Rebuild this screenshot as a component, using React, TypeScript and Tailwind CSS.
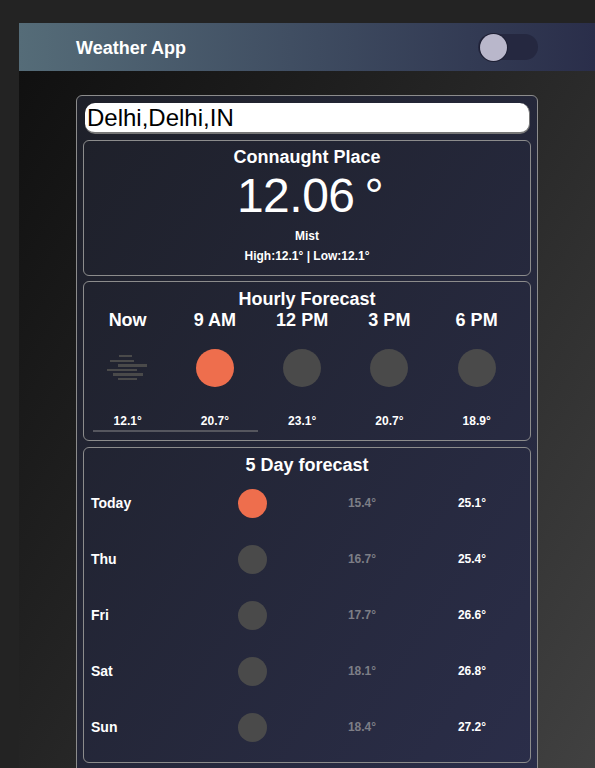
const hourly = [
  { time: "Now", temp: "12.1°", kind: "mist" },
  { time: "9 AM", temp: "20.7°", kind: "sun" },
  { time: "12 PM", temp: "23.1°", kind: "moon" },
  { time: "3 PM", temp: "20.7°", kind: "moon" },
  { time: "6 PM", temp: "18.9°", kind: "moon" },
];

const daily = [
  { day: "Today", low: "15.4°", high: "25.1°", sun: true },
  { day: "Thu", low: "16.7°", high: "25.4°", sun: false },
  { day: "Fri", low: "17.7°", high: "26.6°", sun: false },
  { day: "Sat", low: "18.1°", high: "26.8°", sun: false },
  { day: "Sun", low: "18.4°", high: "27.2°", sun: false },
];

function MistIcon() {
  return (
    <svg width="44" height="30" viewBox="0 0 44 30" className="ml-[3px] text-[#4a4a4a] blur-[0.4px]">
      <g fill="currentColor">
        <rect x="12" y="2" width="13" height="2" />
        <rect x="3" y="7" width="24" height="2" />
        <rect x="11" y="11" width="29" height="3" />
        <rect x="0" y="16" width="30" height="2" />
        <rect x="6" y="20" width="30" height="3" />
        <rect x="11" y="25" width="19" height="2" />
      </g>
    </svg>
  );
}

function Dot({ sun, size }: { sun: boolean; size: string }) {
  return <div className={`${size} rounded-full blur-[0.5px] ${sun ? "bg-[#ee6e4d]" : "bg-[#4a4a4a]"}`} />;
}

export default function App() {
  return (
    <div className="h-[768px] overflow-hidden bg-[#232323] pl-[19px] pt-[23px] font-['Liberation_Sans',Arial,sans-serif] text-white">
      <div className="h-[900px] bg-linear-to-br from-[#0f0f0f] to-[#464646]">
        <header className="flex h-12 items-center justify-between bg-linear-to-r from-[#556c78] to-[#2a2e4a] pl-[57px] pr-[57px]">
          <h1 className="pt-[2px] text-lg font-bold">Weather App</h1>
          <div className="flex h-[26px] w-[60px] items-center rounded-full bg-[#252840] pl-[2px]">
            <div className="size-[27px] rounded-full bg-[#b9b7cb] shadow-[0_0_0_1px_#1d1f33]" />
          </div>
        </header>

        <main className="ml-[57px] mt-6 w-[462px] rounded-md border border-[#8c8c8c] bg-linear-to-br from-[#1e2029] to-[#2b2e4a] px-[6px] pb-8 pt-[7px]">
          <input
            readOnly
            value="Delhi,Delhi,IN"
            className="mx-[2px] block h-[31px] w-[445px] rounded-[10px] border-b-2 border-r border-[#777] bg-white px-[2px] pt-[1px] text-2xl text-black outline-none"
          />

          <section className="mt-[6px] flex h-[136px] flex-col items-center rounded-md border border-[#8c8c8c] pt-[6px]">
            <h2 className="text-lg/5 font-bold">Connaught Place</h2>
            <div className="mt-[5px] pl-[6px] text-5xl/[48px] tracking-[-0.5px] [word-spacing:-3px]">12.06 °</div>
            <p className="mt-[8px] text-xs/4 font-bold">Mist</p>
            <p className="mt-1 text-xs/4 font-bold">High:12.1° | Low:12.1°</p>
          </section>

          <section className="mt-[5px] h-[160px] rounded-md border border-[#8c8c8c] pt-[7px]">
            <h2 className="text-center text-lg/5 font-bold">Hourly Forecast</h2>
            <div className="mt-[1px] grid grid-cols-[repeat(5,87.25px)]">
              {hourly.map((h) => (
                <div key={h.time} className="flex flex-col items-center">
                  <span className="text-lg/5 font-bold">{h.time}</span>
                  <div className="mt-[19px] flex h-[38px] items-center justify-center">
                    {h.kind === "mist" ? (
                      <MistIcon />
                    ) : (
                      <Dot sun={h.kind === "sun"} size="size-[38px]" />
                    )}
                  </div>
                  <span className="mt-[26px] text-xs/4 font-bold">{h.temp}</span>
                </div>
              ))}
            </div>
            <div className="ml-[9px] mt-[1px] h-[2px] w-[165px] bg-[#55565e]" />
          </section>

          <section className="mt-[6px] h-[316px] rounded-md border border-[#8c8c8c] pt-[7px]">
            <h2 className="text-center text-lg/5 font-bold">5 Day forecast</h2>
            <div className="flex flex-col">
              {daily.map((d) => (
                <div
                  key={d.day}
                  className="grid h-14 grid-cols-[106px_110px_110px_110px] items-center pl-[7px] text-sm font-bold"
                >
                  <span className="-mt-[1px]">{d.day}</span>
                  <div className="flex justify-center">
                    <Dot sun={d.sun} size="size-[29px]" />
                  </div>
                  <span className="text-center text-xs text-[#7d7e86]">{d.low}</span>
                  <span className="text-center text-xs">{d.high}</span>
                </div>
              ))}
            </div>
          </section>
        </main>
      </div>
    </div>
  );
}
